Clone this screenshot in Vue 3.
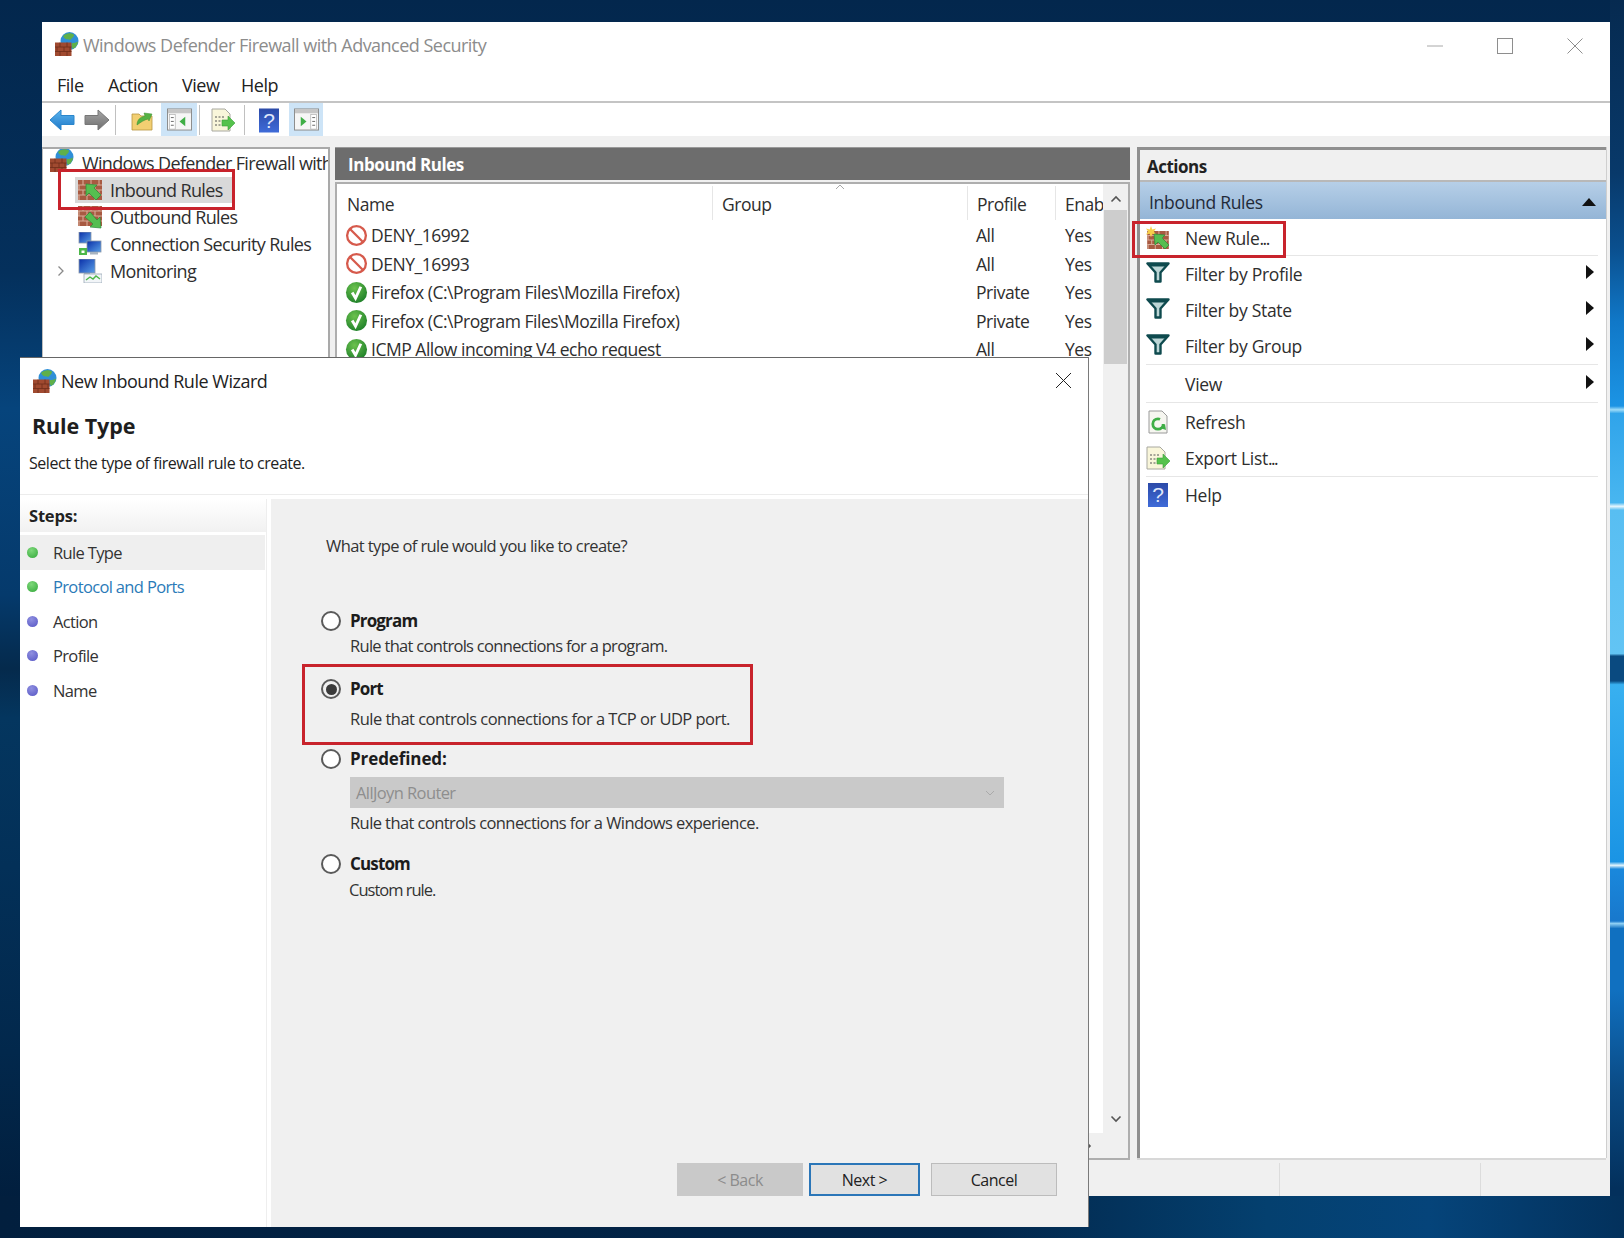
<script setup>
const menus = ['File', 'Action', 'View', 'Help']
const tree = [
  { icon: 'i-in', label: 'Inbound Rules', selected: true },
  { icon: 'i-out', label: 'Outbound Rules' },
  { icon: 'i-conn', label: 'Connection Security Rules' },
  { icon: 'i-mon', label: 'Monitoring', expand: true }
]
const rules = [
  { icon: 'i-deny', name: 'DENY_16992', profile: 'All' },
  { icon: 'i-deny', name: 'DENY_16993', profile: 'All' },
  { icon: 'i-ok', name: 'Firefox (C:\\Program Files\\Mozilla Firefox)', profile: 'Private' },
  { icon: 'i-ok', name: 'Firefox (C:\\Program Files\\Mozilla Firefox)', profile: 'Private' },
  { icon: 'i-ok', name: 'ICMP Allow incoming V4 echo request', profile: 'All' }
]
const actionGroups = [
  [{ icon: 'i-new', label: 'New Rule', dots: '...' }],
  [
    { icon: 'i-filter', label: 'Filter by Profile', more: true },
    { icon: 'i-filter', label: 'Filter by State', more: true },
    { icon: 'i-filter', label: 'Filter by Group', more: true }
  ],
  [{ label: 'View', more: true }],
  [
    { icon: 'i-refresh', label: 'Refresh' },
    { icon: 'i-export', label: 'Export List', dots: '...' }
  ],
  [{ icon: 'i-help', label: 'Help' }]
]
const steps = [
  { label: 'Rule Type', done: true, current: true },
  { label: 'Protocol and Ports', done: true, link: true },
  { label: 'Action' },
  { label: 'Profile' },
  { label: 'Name' }
]
</script>

<template>
  <div class="desk">
    <svg class="defs" width="0" height="0" aria-hidden="true">
      <defs>
        <linearGradient id="gBlue" x1="0" y1="0" x2="0" y2="1"><stop offset="0" stop-color="#5ab4ee"/><stop offset="1" stop-color="#1f78c8"/></linearGradient>
        <linearGradient id="gGray" x1="0" y1="0" x2="0" y2="1"><stop offset="0" stop-color="#a6a6a6"/><stop offset="1" stop-color="#6e6e6e"/></linearGradient>
        <linearGradient id="gHelp" x1="0" y1="0" x2="0" y2="1"><stop offset="0" stop-color="#2b4aa8"/><stop offset="1" stop-color="#3f6bd8"/></linearGradient>
        <linearGradient id="gScreen" x1="0" y1="0" x2="1" y2="1"><stop offset="0" stop-color="#0a2fa8"/><stop offset="1" stop-color="#5aa0e8"/></linearGradient>
        <radialGradient id="gGreen" cx=".4" cy=".3" r=".8"><stop offset="0" stop-color="#6cc24e"/><stop offset="1" stop-color="#177a26"/></radialGradient>
      </defs>
      <symbol id="bricks" viewBox="0 0 24 20">
        <rect width="24" height="20" fill="#a85a42"/>
        <path d="M0 5h24M0 10h24M0 15h24M5 0v5M13 0v5M21 0v5M1 5v5M9 5v5M17 5v5M5 10v5M13 10v5M21 10v5M1 15v5M9 15v5M17 15v5" stroke="#d8ab98" stroke-width="1.1" fill="none"/>
      </symbol>
      <symbol id="i-fw" viewBox="0 0 24 24">
        <circle cx="14.5" cy="9" r="9" fill="#2f8fd8"/>
        <path d="M8 4c3-3.500 8-3.500 11-1.500 0 3-2 3-3 5-2 1-3-1-4 0-2-.5-3-1.500-4-3.500z" fill="#5fb04a"/>
        <path d="M17 11c2 0 4 0 6-1.500-.5 3.500-2 6-5 7.500-1-2-2-3-1-6z" fill="#5fb04a"/>
        <rect x="0" y="10.500" width="16.500" height="13.500" fill="#a04a30"/>
        <path d="M0 15h16.500M0 19.500h16.500M5 10.500V15M12 10.500V15M2 15v4.500M9 15v4.500M15 15v4.500M5 19.500V24M12 19.500V24" stroke="#6f2d1a" stroke-width=".8" fill="none"/>
      </symbol>
      <symbol id="i-in" viewBox="0 0 24 24">
        <use href="#bricks" x="0" y="2" width="24" height="20"/>
        <path d="M8 6l11 1-3 3 7 7-5 5-7-7-3 3z" fill="#55be50" stroke="#2b8a38" stroke-width=".7"/>
      </symbol>
      <symbol id="i-out" viewBox="0 0 24 24">
        <use href="#bricks" x="0" y="1" width="24" height="20"/>
        <path d="M23 23l-11-1 3-3-8-7 5-5 7 8 3-3z" fill="#55be50" stroke="#2b8a38" stroke-width=".7"/>
      </symbol>
      <symbol id="i-new" viewBox="0 0 24 24">
        <use href="#bricks" x="0" y="5" width="24" height="18"/>
        <path d="M5 0l1.200 3.600L10 2.600 7.800 5.600 10 8.600 6.400 7.800 5 11.200 3.600 7.800 0 8.600 2.200 5.600 0 2.600l3.800 1z" fill="#f6cf4a"/>
        <path d="M8 8l11 1-3 3 7 7-4 4-7-7-3 3z" fill="#55be50" stroke="#2b8a38" stroke-width=".7"/>
      </symbol>
      <symbol id="i-conn" viewBox="0 0 24 24">
        <rect x="1" y="0" width="12" height="11" fill="url(#gScreen)" stroke="#8a97a8" stroke-width=".8"/>
        <rect x="9" y="9" width="14" height="11" fill="url(#gScreen)" stroke="#8a97a8" stroke-width=".8"/>
        <rect x="12" y="20" width="8" height="2.500" fill="#a8b4c0"/>
        <rect x="1" y="16" width="8" height="7" fill="#4cb748"/>
        <rect x="3.500" y="18.500" width="3" height="2.500" fill="#fff"/>
      </symbol>
      <symbol id="i-mon" viewBox="0 0 24 24">
        <rect x="1" y="0" width="16" height="14" fill="url(#gScreen)" stroke="#8a97a8" stroke-width=".8"/>
        <rect x="6" y="14" width="6" height="3" fill="#9aa8b6"/>
        <rect x="6" y="15" width="18" height="9" fill="#f2f5f8" stroke="#9aa8b6" stroke-width=".8"/>
        <path d="M8 21l4-3 3 2 3-3 4 3" fill="none" stroke="#4cb748" stroke-width="1.400"/>
      </symbol>
      <symbol id="i-deny" viewBox="0 0 24 24">
        <circle cx="12" cy="12" r="9.800" fill="#fff" stroke="#d65a4c" stroke-width="2.400"/>
        <path d="M5 5l14 14" stroke="#d65a4c" stroke-width="2.400"/>
      </symbol>
      <symbol id="i-ok" viewBox="0 0 24 24">
        <circle cx="12" cy="12" r="11" fill="url(#gGreen)"/>
        <path d="M7.500 12l3.500 6 5.500-12" fill="none" stroke="#fff" stroke-width="3"/>
      </symbol>
      <symbol id="i-filter" viewBox="0 0 24 24">
        <path d="M1.500 1.500h21L14.500 10.500V19.500h-5V10.500z" fill="#bcd6d6" stroke="#0e4a4e" stroke-width="2.400" stroke-linejoin="round"/>
        <path d="M1.500 1.500h21l-2.500 3H4z" fill="#0e4a4e"/>
      </symbol>
      <symbol id="i-refresh" viewBox="0 0 24 24">
        <path d="M3 1h13l5 5v17H3z" fill="#f6f6f0" stroke="#9a9a9a"/>
        <circle cx="12" cy="14" r="5.200" fill="none" stroke="#3fae46" stroke-width="2.800" stroke-dasharray="26 7"/>
        <path d="M14 18l6 2-1-6z" fill="#3fae46"/>
      </symbol>
      <symbol id="i-export" viewBox="0 0 24 24">
        <path d="M1 1h13l5 5v17H1z" fill="#f9f6da" stroke="#a8a8a0"/>
        <path d="M4 9h9M4 13h7M4 17h7" stroke="#555" stroke-width="1.200" stroke-dasharray="2 1.500"/>
        <path d="M11 12h6V8l7 7-7 7v-4h-6z" fill="#55c24c" stroke="#3a9e3a" stroke-width=".6"/>
      </symbol>
      <symbol id="i-help" viewBox="0 0 20 24">
        <rect width="20" height="24" fill="url(#gHelp)"/>
        <text x="10" y="19" font-family="Liberation Sans, sans-serif" font-size="21" fill="#dfe6fa" text-anchor="middle">?</text>
      </symbol>
      <symbol id="i-back" viewBox="0 0 26 22">
        <path d="M1 11L12 1v5.500h13v9H12V21z" fill="url(#gBlue)" stroke="#2a86cc" stroke-linejoin="round"/>
      </symbol>
      <symbol id="i-fwd" viewBox="0 0 26 22">
        <path d="M25 11L14 1v5.500H1v9h13V21z" fill="url(#gGray)" stroke="#777" stroke-linejoin="round"/>
      </symbol>
      <symbol id="i-folder" viewBox="0 0 22 22">
        <path d="M1 5h7l2 2h11v14H1z" fill="#f2cf72" stroke="#b89640" stroke-width=".8"/>
        <path d="M6 16c0-5 3-8 8-9l-1-3 8 1-3 7-1-2c-4 1-7 3-11 6z" fill="#55b244" stroke="#3d8e33" stroke-width=".5"/>
      </symbol>
      <symbol id="i-paneL" viewBox="0 0 26 24">
        <rect x=".5" y="1" width="25" height="22" fill="#f6f6f6" stroke="#8a8a8a"/>
        <rect x="1" y="1.500" width="24" height="4" fill="#c6c6c6"/>
        <rect x="2.500" y="7" width="6" height="15" fill="#fff" stroke="#a0a0a0" stroke-width=".6"/>
        <path d="M4 10h3M4 14h3M4 18h3" stroke="#666"/>
        <path d="M19 9v10l-6-5z" fill="#3fae46"/>
      </symbol>
      <symbol id="i-paneR" viewBox="0 0 26 24">
        <rect x=".5" y="1" width="25" height="22" fill="#f6f6f6" stroke="#8a8a8a"/>
        <rect x="1" y="1.500" width="24" height="4" fill="#c6c6c6"/>
        <rect x="17.500" y="7" width="6" height="15" fill="#fff" stroke="#a0a0a0" stroke-width=".6"/>
        <path d="M19 10h3M19 14h3M19 18h3" stroke="#666"/>
        <path d="M7 9v10l6-5z" fill="#3fae46"/>
      </symbol>
    </svg>

    <section class="win">
      <header class="titlebar">
        <svg class="ti"><use href="#i-fw"/></svg>
        <span class="title">Windows Defender Firewall with Advanced Security</span>
        <div class="controls">
          <svg width="16" height="16" viewBox="0 0 16 16"><path d="M0 8h16" stroke="#a8a8a8"/></svg>
          <svg width="16" height="16" viewBox="0 0 16 16"><rect x=".5" y=".5" width="15" height="15" fill="none" stroke="#8e8e8e"/></svg>
          <svg width="16" height="16" viewBox="0 0 16 16"><path d="M.5.5l15 15M15.500.5l-15 15" stroke="#8e8e8e"/></svg>
        </div>
      </header>

      <nav class="menubar">
        <span v-for="m in menus" :key="m" class="menu">{{ m }}</span>
      </nav>

      <div class="toolbar">
        <svg class="tb tb-back"><use href="#i-back"/></svg>
        <svg class="tb tb-fwd"><use href="#i-fwd"/></svg>
        <i class="sep s1"></i>
        <svg class="tb tb-folder"><use href="#i-folder"/></svg>
        <span class="tbtn t1"><svg class="tb-pane"><use href="#i-paneL"/></svg></span>
        <i class="sep s2"></i>
        <svg class="tb tb-doc"><use href="#i-export"/></svg>
        <i class="sep s3"></i>
        <svg class="tb tb-help"><use href="#i-help"/></svg>
        <span class="tbtn t2"><svg class="tb-pane"><use href="#i-paneR"/></svg></span>
      </div>

      <div class="workspace">
        <div class="panes">
          <aside class="tree">
            <div class="root">
              <svg class="root-ic"><use href="#i-fw"/></svg>
              <span class="root-t">Windows Defender Firewall with Advanced Security</span>
            </div>
            <div v-for="t in tree" :key="t.label" class="node">
              <span class="exp"><svg v-if="t.expand" width="8" height="12" viewBox="0 0 8 12"><path d="M1.500 1.500L6 6l-4.500 4.500" fill="none" stroke="#8a8a8a" stroke-width="1.300"/></svg></span>
              <span class="node-in" :class="{ sel: t.selected }">
                <svg class="node-ic"><use :href="'#' + t.icon"/></svg>
                <span>{{ t.label }}</span>
              </span>
            </div>
          </aside>

          <main class="center">
            <div class="center-h">Inbound Rules</div>
            <div class="list">
              <div class="list-main">
                <div class="rows">
                  <div class="grid head">
                    <span class="c">Name</span>
                    <span class="c">Group
                      <svg class="sort" width="10" height="6" viewBox="0 0 10 6"><path d="M1 5l4-4 4 4" fill="none" stroke="#a8a8a8"/></svg>
                    </span>
                    <span class="c">Profile</span>
                    <span class="c clip">Enabled</span>
                  </div>
                  <div v-for="(r, i) in rules" :key="i" class="grid row">
                    <span class="c namec"><svg class="rule-ic"><use :href="'#' + r.icon"/></svg>{{ r.name }}</span>
                    <span class="c"></span>
                    <span class="c">{{ r.profile }}</span>
                    <span class="c yes">Yes</span>
                  </div>
                </div>
                <div class="vscroll">
                  <svg width="12" height="8" viewBox="0 0 12 8"><path d="M1.500 6.500L6 2l4.500 4.500" fill="none" stroke="#555" stroke-width="1.600"/></svg>
                  <div class="thumb"></div>
                  <svg class="down" width="12" height="8" viewBox="0 0 12 8"><path d="M1.500 1.500L6 6l4.500-4.500" fill="none" stroke="#555" stroke-width="1.600"/></svg>
                </div>
              </div>
              <div class="hscroll">
                <svg width="8" height="12" viewBox="0 0 8 12"><path d="M1.500 1.500L6 6l-4.500 4.500" fill="none" stroke="#555" stroke-width="1.600"/></svg>
              </div>
            </div>
          </main>

          <aside class="actions">
            <div class="act-h">Actions</div>
            <div class="act-sub">
              <span>Inbound Rules</span>
              <svg width="14" height="8" viewBox="0 0 14 8"><path d="M0 8L7 0l7 8z" fill="#111"/></svg>
            </div>
            <div v-for="(g, gi) in actionGroups" :key="gi" class="act-group">
              <div v-for="a in g" :key="a.label" class="act">
                <span class="act-ic"><svg v-if="a.icon" width="24" height="24"><use :href="'#' + a.icon"/></svg></span>
                <span class="act-t">{{ a.label }}<span v-if="a.dots" class="dots">{{ a.dots }}</span></span>
                <svg v-if="a.more" class="more" width="8" height="14" viewBox="0 0 8 14"><path d="M0 0l8 7-8 7z" fill="#111"/></svg>
              </div>
            </div>
          </aside>
        </div>
        <footer class="status">
          <span class="st st1"></span>
          <span class="st st2"></span>
          <span class="st st3"></span>
        </footer>
      </div>
    </section>

    <section class="dlg">
      <div class="dlg-top">
        <div class="dlg-title">
          <svg class="dlg-ic"><use href="#i-fw"/></svg>
          <span>New Inbound Rule Wizard</span>
          <svg class="dlg-x" width="15" height="15" viewBox="0 0 15 15"><path d="M0 0l15 15M15 0L0 15" stroke="#222"/></svg>
        </div>
        <h1 class="dlg-h">Rule Type</h1>
        <p class="dlg-s">Select the type of firewall rule to create.</p>
      </div>
      <div class="dlg-body">
        <aside class="steps">
          <div class="steps-h">Steps:</div>
          <div v-for="s in steps" :key="s.label" class="step" :class="{ cur: s.current, link: s.link }">
            <i class="dot" :class="{ green: s.done }"></i>{{ s.label }}
          </div>
        </aside>
        <div class="pane">
          <p class="q">What type of rule would you like to create?</p>

          <div class="opt o1">
            <span class="radio"></span>
            <div class="opt-l">Program</div>
            <div class="opt-d d1">Rule that controls connections for a program.</div>
          </div>
          <div class="opt o2">
            <span class="radio on"></span>
            <div class="opt-l">Port</div>
            <div class="opt-d d2">Rule that controls connections for a TCP or UDP port.</div>
          </div>
          <div class="opt o3">
            <span class="radio"></span>
            <div class="opt-l pre">Predefined:</div>
            <div class="combo">
              <span>AllJoyn Router</span>
              <svg width="10" height="6" viewBox="0 0 10 6"><path d="M1 1l4 4 4-4" fill="none" stroke="#aaa"/></svg>
            </div>
            <div class="opt-d d3">Rule that controls connections for a Windows experience.</div>
          </div>
          <div class="opt o4">
            <span class="radio"></span>
            <div class="opt-l">Custom</div>
            <div class="opt-d d4">Custom rule.</div>
          </div>

          <div class="btns">
            <button class="btn back" disabled>&lt; Back</button>
            <button class="btn next">Next &gt;</button>
            <button class="btn cancel">Cancel</button>
          </div>
        </div>
      </div>
    </section>

    <div class="mark m-tree"></div>
    <div class="mark m-new"></div>
    <div class="mark m-port"></div>
  </div>
</template>

<style scoped>
.desk {
  position: relative;
  width: 1624px;
  height: 1238px;
  overflow: hidden;
  font-family: "Open Sans", "Noto Sans", sans-serif;
  color: #2e2e2e;
  background:
    linear-gradient(90deg, #021f3e 0, #02264a 60%, #04406f 78%, #05447a 88%, #03315c 100%) left bottom / 100% 42px no-repeat,
    linear-gradient(180deg, #062a50 0, #08396a 14%, #0a4f8e 20%, #1078c8 26%, #1c94e4 32.8%, #9fdcf8 33.1%, #30a4ea 33.4%, #48b6f0 40.6%, #e6f6fd 40.9%, #58bef2 41.2%, #62c4f4 52.8%, #0a4a80 53%, #0a4a80 55%, #38b0f0 55.3%, #1a94e4 69.6%, #e2f4fc 69.9%, #1a88dc 70.2%, #1878cc 74.4%, #8fd0f4 74.6%, #1070c0 75%, #1070c0 80%, #0a4a84 88%, #03305c 96%) right top / 14px 100% no-repeat,
    linear-gradient(180deg, #03274d 0, #04305c 22%, #06447c 33%, #053a6c 48%, #052a4c 54%, #04365f 58%, #033058 70%, #02284c 85%, #011c3a 100%);
}
.defs { position: absolute; }

.win {
  position: absolute;
  left: 42px;
  top: 22px;
  width: 1568px;
  height: 1174px;
  display: flex;
  flex-direction: column;
  background: #fff;
}
.titlebar {
  height: 44px;
  display: flex;
  align-items: center;
  padding: 2px 27px 0 13px;
  box-sizing: border-box;
  flex: none;
}
.ti { width: 24px; height: 24px; margin-right: 4px; margin-top: -2px; }
.title { font-size: 18px; color: #8c8c8c; letter-spacing: -.52px; white-space: nowrap; }
.controls { margin-left: auto; display: flex; gap: 54px; margin-top: 2px; }
.controls svg { display: block; }
.menubar {
  flex: none;
  border-bottom: 2px solid #c4c4c4;
  display: flex;
  align-items: center;
  padding: 3px 0 0 15px;
  box-sizing: border-box;
  height: 37px;
  font-size: 18px;
  letter-spacing: -.5px;
  color: #222;
}
.menu:nth-child(1) { width: 51px; }
.menu:nth-child(2) { width: 74px; }
.menu:nth-child(3) { width: 59px; }
.toolbar {
  height: 33px;
  flex: none;
  display: flex;
  align-items: center;
}
.tb { display: block; flex: none; margin-top: 1px; }
.tb-back { width: 26px; height: 22px; margin-left: 7px; }
.tb-fwd { width: 26px; height: 22px; margin-left: 9px; }
.sep { display: block; width: 1px; height: 30px; background: #c0c0c0; flex: none; }
.s1 { margin-left: 5px; }
.tb-folder { width: 22px; height: 22px; margin-left: 15px; }
.tbtn {
  height: 33px;
  background: #cde4f7;
  display: flex;
  align-items: center;
  justify-content: center;
  flex: none;
}
.t1 { width: 36px; margin-left: 8px; }
.s2 { margin-left: 2px; }
.tb-doc { width: 24px; height: 24px; margin-left: 11px; }
.s3 { margin-left: 9px; }
.tb-help { width: 20px; height: 25px; margin-left: 14px; }
.t2 { width: 34px; margin-left: 10px; }
.tb-pane { width: 25px; height: 23px; display: block; }

.workspace {
  flex: 1;
  min-height: 0;
  background: #f0f0f0;
  display: flex;
  flex-direction: column;
  padding-top: 11px;
}
.panes {
  flex: 1;
  min-height: 0;
  display: flex;
  padding-right: 4px;
}
.tree {
  width: 288px;
  flex: none;
  box-sizing: border-box;
  background: #fff;
  border-top: 2px solid #a9a9a9;
  border-right: 2px solid #a9a9a9;
  border-left: 1px solid #bdbdbd;
  overflow: hidden;
  white-space: nowrap;
  font-size: 18px;
  letter-spacing: -.65px;
}
.root { height: 27px; display: flex; align-items: center; padding-left: 7px; }
.root-ic { width: 24px; height: 24px; margin-right: 8px; flex: none; margin-top: -6px; }
.node { height: 27px; display: flex; align-items: center; }
.exp { width: 32px; padding-left: 14px; box-sizing: border-box; flex: none; display: flex; align-items: center; }
.node-in { display: flex; align-items: center; height: 26px; padding: 0 9px 0 3px; }
.node-in.sel { background: #d9d9d9; }
.node-ic { width: 24px; height: 24px; margin-right: 8px; flex: none; }

.center {
  width: 795px;
  flex: none;
  margin-left: 5px;
  display: flex;
  flex-direction: column;
}
.center-h {
  height: 33px;
  flex: none;
  background: #6d6d6d;
  color: #fff;
  font-weight: 700;
  font-size: 17px;
  letter-spacing: -.45px;
  display: flex;
  align-items: center;
  padding-left: 13px;
  border-top: 1px solid #999;
  box-sizing: border-box;
}
.list {
  flex: 1;
  min-height: 0;
  margin-top: 2px;
  background: #fff;
  border: 2px solid #aeaeae;
  display: flex;
  flex-direction: column;
}
.list-main { flex: 1; min-height: 0; display: flex; }
.rows { flex: 1; min-width: 0; overflow: hidden; font-size: 17.5px; letter-spacing: -.48px; }
.grid { display: grid; grid-template-columns: 375px 255px 88px 48px; }
.c { padding-left: 9px; white-space: nowrap; overflow: hidden; position: relative; }
.head { height: 37px; align-items: start; padding-top: 2px; box-sizing: border-box; }
.head .c { height: 34px; line-height: 36px; border-left: 1px solid #e6e6e6; overflow: visible; }
.head .c:first-child { border-left: 0; padding-left: 10px; }
.head .clip { overflow: hidden; }
.sort { position: absolute; left: 122px; top: -2px; }
.row { height: 28.5px; align-items: center; }
.yes { padding-left: 10px; }
.namec { display: flex; align-items: center; padding-left: 8px; overflow: visible; }
.rule-ic { width: 23px; height: 23px; margin-right: 3px; flex: none; }
.vscroll {
  width: 25px;
  flex: none;
  background: #f0f0f0;
  display: flex;
  flex-direction: column;
  align-items: center;
  padding-top: 11px;
  box-sizing: border-box;
}
.thumb { width: 23px; height: 154px; background: #cdcdcd; margin-top: 7px; }
.down { margin-top: auto; margin-bottom: 10px; }
.hscroll {
  height: 25px;
  flex: none;
  background: #f0f0f0;
  display: flex;
  align-items: center;
  justify-content: flex-end;
  padding-right: 36px;
}

.actions {
  flex: 1;
  min-width: 0;
  margin-left: 7px;
  background: #fff;
  border-left: 3px solid #8f8f8f;
  border-top: 3px solid #8f8f8f;
  box-shadow: 1px 0 0 #cfcfcf, 0 2px 0 #d8d8d8;
  white-space: nowrap;
  margin-bottom: 2px;
}
.act-h {
  height: 32px;
  background: #f0f0f0;
  border-bottom: 2px solid #b8b8b8;
  font-weight: 700;
  font-size: 17px;
  letter-spacing: -.5px;
  color: #222;
  padding: 2px 0 0 7px;
  display: flex;
  align-items: center;
  box-sizing: border-box;
}
.act-sub {
  height: 37px;
  background: linear-gradient(180deg, #b6cfe8, #94b5d6);
  display: flex;
  align-items: center;
  justify-content: space-between;
  padding: 2px 10px 0 9px;
  box-sizing: border-box;
  font-size: 17.5px;
  letter-spacing: -.3px;
  color: #1f2a38;
}
.act-group {
  margin: 0 8px 0 6px;
  border-bottom: 1px solid #e6e6e6;
}
.act-group:nth-of-type(3) { padding-top: 1px; }
.act-group:nth-of-type(3) .act { height: 35px; }
.act-group:nth-of-type(5) { padding-top: 1px; }
.act-group:nth-of-type(6) { padding-top: 1px; }
.act-group:last-child { border-bottom: 0; }
.act {
  height: 36px;
  display: flex;
  align-items: center;
  font-size: 17.5px;
  letter-spacing: -.3px;
}
.act-ic { width: 24px; height: 24px; margin-right: 15px; flex: none; }
.act-ic svg { display: block; }
.dots { letter-spacing: -1.500px; }
.more { margin-left: auto; margin-right: 4px; margin-top: -4px; }

.status {
  height: 33px;
  flex: none;
  margin-top: 3px;
  display: flex;
  justify-content: flex-end;
}
.st { border-left: 1px solid #dcdcdc; }
.st1 { flex: 1; border-left: 0; }
.st2 { width: 200px; }
.st3 { width: 129px; }

.dlg {
  position: absolute;
  left: 20px;
  top: 357px;
  width: 1068px;
  height: 870px;
  box-sizing: border-box;
  display: flex;
  flex-direction: column;
  background: #fff;
  border-top: 1px solid #666;
  box-shadow: 1px 0 0 #7a7a7a;
  color: #222;
}
.dlg-top { height: 137px; flex: none; border-bottom: 1px solid #ececec; box-sizing: border-box; padding-left: 12px; }
.dlg-title { height: 46px; display: flex; align-items: center; font-size: 18px; letter-spacing: -.48px; position: relative; margin-left: 1px; }
.dlg-ic { width: 24px; height: 24px; margin-right: 4px; flex: none; }
.dlg-x { position: absolute; right: 17px; top: 15px; }
.dlg-h { margin: 0; height: 44px; line-height: 43px; font-size: 21.5px; font-weight: 700; letter-spacing: -.1px; color: #1e1e1e; }
.dlg-s { margin: 0 0 0 -3px; height: 31px; line-height: 31px; font-size: 16px; letter-spacing: -.45px; color: #222; }
.dlg-body { flex: 1; min-height: 0; display: flex; padding-top: 4px; }
.steps { width: 247px; flex: none; border-right: 1px solid #eeeeee; box-sizing: border-box; font-size: 16.5px; letter-spacing: -.65px; }
.steps-h { height: 33px; line-height: 33px; background: linear-gradient(180deg, #fff, #f1f1f1); font-weight: 700; padding-left: 9px; color: #222; margin-bottom: 3px; letter-spacing: -.2px; }
.step { height: 34.5px; display: flex; align-items: center; padding-left: 7px; margin-right: 1px; color: #333; }
.step.cur { background: #efefef; }
.step.link { color: #2a7ab8; }
.dot {
  width: 11px;
  height: 11px;
  border-radius: 50%;
  margin-right: 15px;
  background: radial-gradient(circle at 40% 30%, #8f8fe0, #5555c4);
  flex: none;
}
.dot.green { background: radial-gradient(circle at 40% 30%, #7ed87a, #33a83a); }
.pane {
  flex: 1;
  min-width: 0;
  margin-left: 4px;
  background: #f0f0f0;
  padding: 36px 31px 31px 55px;
  box-sizing: border-box;
  display: flex;
  flex-direction: column;
  font-size: 16.5px;
  letter-spacing: -.6px;
}
.q { margin: 0; height: 22px; line-height: 22px; color: #333; }
.opt {
  display: grid;
  grid-template-columns: 20px 1fr;
  column-gap: 9px;
  margin-left: -5px;
}
.o1 { margin-top: 52px; }
.o2 { margin-top: 19px; }
.o3 { margin-top: 16px; }
.o4 { margin-top: 18px; }
.radio {
  width: 20px;
  height: 20px;
  border-radius: 50%;
  border: 2px solid #5a5a5a;
  background: #fff;
  box-sizing: border-box;
  align-self: center;
  display: flex;
  align-items: center;
  justify-content: center;
}
.radio.on { background: #f0f0f0; }
.radio.on::after { content: ""; width: 11px; height: 11px; border-radius: 50%; background: #3a3a3a; }
.opt-l { height: 24px; line-height: 24px; font-weight: 700; color: #1c1c1c; letter-spacing: -.85px; font-size: 17px; }
.opt-l.pre { letter-spacing: -.1px; }
.opt-d { grid-column: 2; height: 24px; line-height: 24px; color: #333; }
.opt-d.d1 { margin-top: 1px; letter-spacing: -.7px; }
.opt-d.d2 { margin-top: 6px; letter-spacing: -.52px; }
.opt-d.d3 { margin-top: 4px; height: 22px; line-height: 22px; letter-spacing: -.58px; }
.opt-d.d4 { margin-top: 2px; letter-spacing: -1px; margin-left: -1px; }
.combo {
  grid-column: 2;
  width: 654px;
  height: 31px;
  margin-top: 6px;
  background: #c9c9c9;
  color: #8e8e8e;
  display: flex;
  align-items: center;
  justify-content: space-between;
  padding: 0 9px 0 6px;
  box-sizing: border-box;
}
.btns { margin-top: auto; display: flex; justify-content: flex-end; }
.btn {
  height: 33px;
  font-family: inherit;
  font-size: 16px;
  letter-spacing: -.5px;
  padding: 0;
  border: 1px solid #bcbcbc;
  background: #e1e1e1;
  color: #222;
}
.back { width: 126px; background: #c9c9c9; border-color: #c9c9c9; color: #8c8c8c; }
.next { width: 111px; margin-left: 6px; border: 2px solid #2b76b8; }
.cancel { width: 126px; margin-left: 11px; }

.mark { position: absolute; border: 3px solid #c8232c; box-sizing: border-box; pointer-events: none; }
.m-tree { left: 58px; top: 169px; width: 177px; height: 41px; }
.m-new { left: 1132px; top: 221px; width: 154px; height: 37px; }
.m-port { left: 302px; top: 664px; width: 451px; height: 81px; }
</style>
